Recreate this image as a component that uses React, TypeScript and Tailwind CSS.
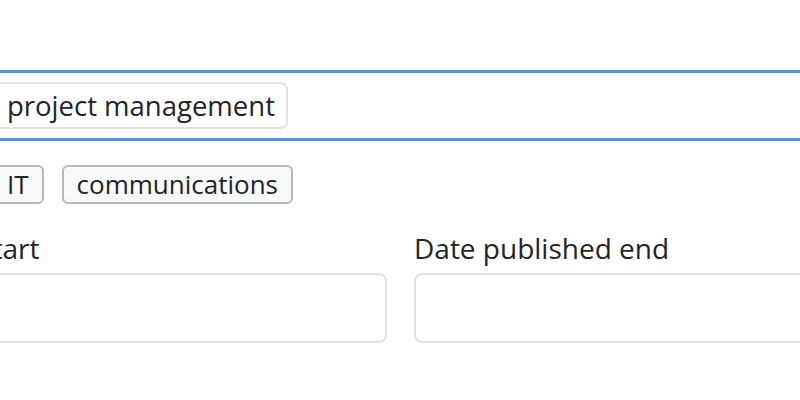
import * as React from "react";

const SUGGESTIONS = ["IT", "communications"];

function TagChip({ label }: { label: string }) {
  return (
    <span className="flex h-[47px] items-center gap-[8px] rounded-[7px] border-2 border-[#dee2e6] bg-white pl-[9px] pr-[11px] text-[27.5px] text-[#212529]">
      <span aria-hidden="true" className="w-[14px] text-[#6c757d]">×</span>
      {label}
    </span>
  );
}

function SuggestionChip({ label }: { label: string }) {
  return (
    <button
      type="button"
      className="flex h-[39px] items-center rounded-[6px] border-2 border-[#b5b9be] bg-[#f8f9fa] px-[13px] text-[26px] text-[#212529]"
    >
      {label}
    </button>
  );
}

function DateField({ label }: { label: string }) {
  return (
    <div className="flex flex-col">
      <label className="text-[28px] leading-[36px] text-[#212529]">{label}</label>
      <input
        type="text"
        className="mt-[7px] h-[70px] w-full rounded-[8px] border-2 border-[#dee2e6] bg-white px-4 outline-none"
      />
    </div>
  );
}

export default function App() {
  return (
    <div className="h-[400px] w-[800px] overflow-hidden bg-white font-['Open_Sans',sans-serif]">
      <div className="ml-[-226px] w-[1250px] pt-[70px]">
        <div className="flex h-[71px] items-center border-[3px] border-[#4d94e6] pl-[197px]">
          <TagChip label="project management" />
        </div>
        <div className="mt-[24px] flex gap-[18px] pl-[218px]">
          {SUGGESTIONS.map((s) => (
            <SuggestionChip key={s} label={s} />
          ))}
        </div>
        <div className="mt-[26px] grid grid-cols-[613px_613px] gap-x-[27px]">
          <DateField label="Date published start" />
          <DateField label="Date published end" />
        </div>
      </div>
    </div>
  );
}
